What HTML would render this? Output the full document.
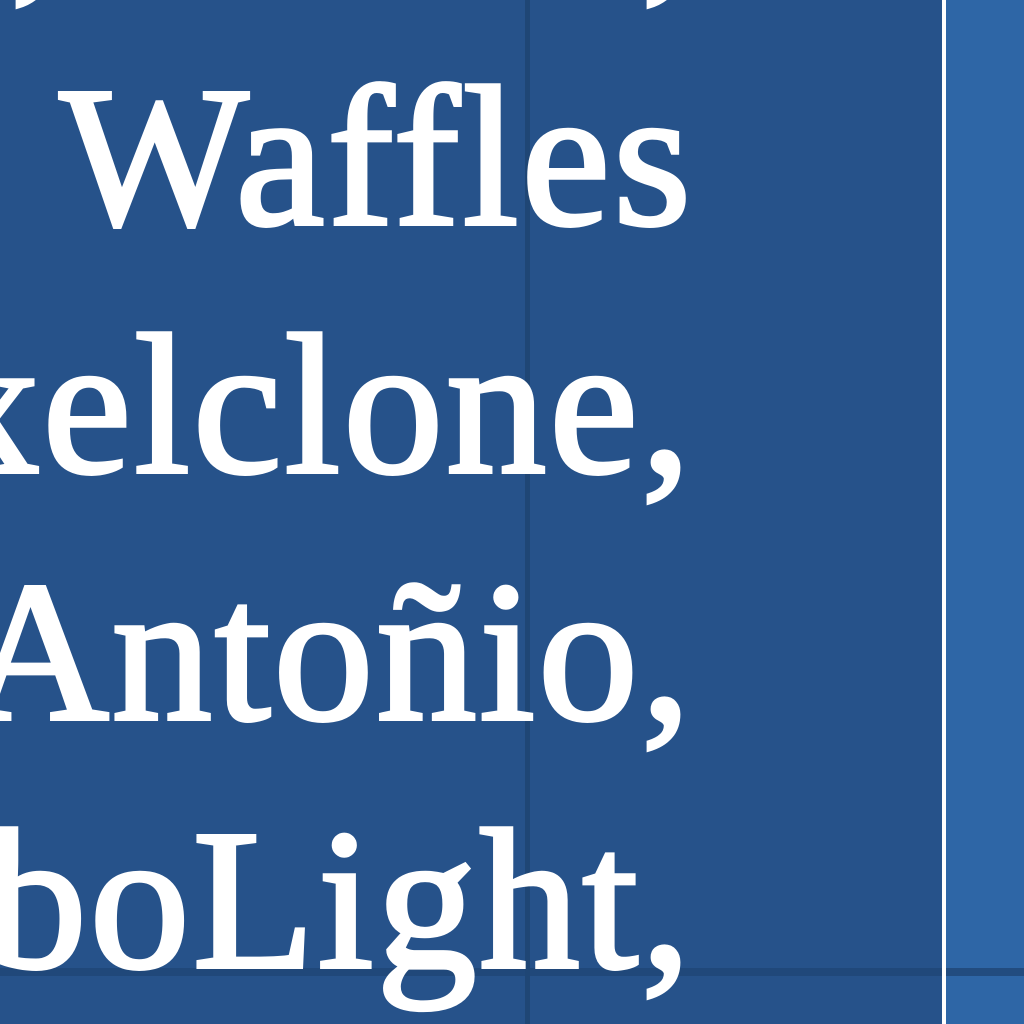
<!DOCTYPE html>
<html><head><style>
html,body{margin:0;padding:0;}
body{width:1024px;height:1024px;overflow:hidden;position:relative;background:#26528a;font-family:"Liberation Serif",serif;}
.right{position:absolute;left:946px;top:0;width:78px;height:1024px;background:#2e66a6;}
.wl{position:absolute;left:942px;top:0;width:4px;height:1024px;background:#fff;}
.vl{position:absolute;left:525px;top:0;width:5px;height:1024px;background:#1f4675;}
.hl{position:absolute;left:0;top:968px;width:1024px;height:8px;background:#1f4675;opacity:.8;}
.wrap{position:absolute;left:0;top:0;width:1024px;height:1024px;overflow:hidden;}
.t{position:absolute;right:330px;color:#fff;font-size:200px;line-height:1;white-space:nowrap;letter-spacing:3px;-webkit-text-stroke:4px #fff;}
</style></head><body>
<div class="right"></div>
<div class="vl"></div>
<div class="hl"></div>
<div class="wl"></div>
<div class="wrap">
<div class="t" style="top:-190px;">,</div>
<div class="t" style="top:-190px;left:10px;right:auto">,</div>
<div class="t" style="top:58px">Waffles</div>
<div class="t" style="top:306px">xelclone,</div>
<div class="t" style="top:553px">Antoñio,</div>
<div class="t" style="top:801px">rboLight,</div>
</div>
</body></html>
